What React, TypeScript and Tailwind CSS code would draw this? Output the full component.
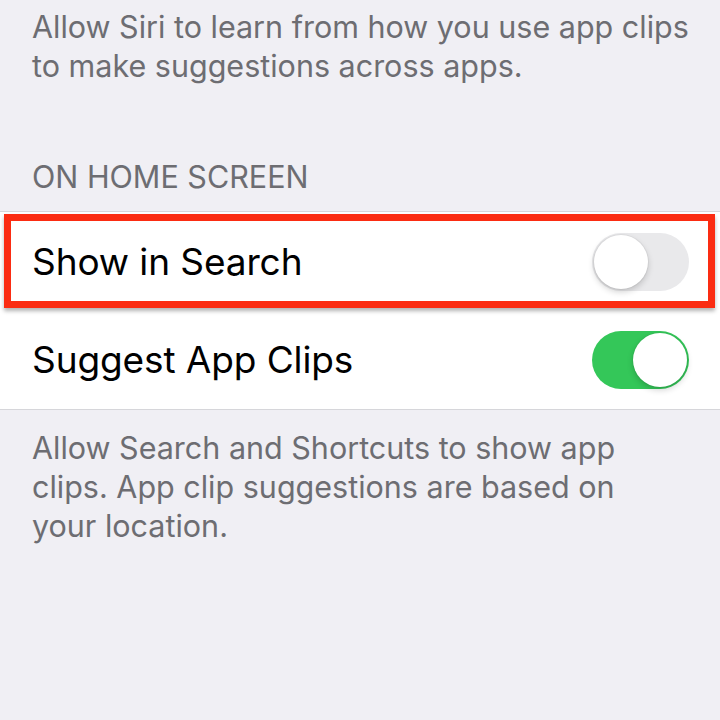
import React from "react";

function Toggle({ on }: { on: boolean }) {
  return (
    <div
      className={
        "relative w-[97px] h-[58px] rounded-full shrink-0 " +
        (on ? "bg-[#34c759]" : "bg-[#e9e9eb]")
      }
    >
      <div
        className={
          "absolute top-[2px] w-[54px] h-[54px] rounded-full bg-white shadow-[0_3px_6px_rgba(0,0,0,0.18),0_0_0_1px_rgba(0,0,0,0.04)] " +
          (on ? "right-[2px]" : "left-[2px]")
        }
      />
    </div>
  );
}

export default function App() {
  return (
    <div
      className="w-[720px] h-[720px] bg-[#f0eff4] overflow-hidden"
      style={{ fontFamily: "Inter, 'Noto Sans', sans-serif" }}
    >
      <p className="pt-[7px] pl-[32px] pr-[10px] text-[30.5px] leading-[39px] text-[#6d6d72] whitespace-nowrap">
        Allow Siri to learn from how you use app clips
        <br />
        to make suggestions across apps.
      </p>
      <div className="mt-[72px] pl-[32px] text-[30.5px] leading-[39px] text-[#6d6d72]">
        ON HOME SCREEN
      </div>
      <div className="mt-[15px] bg-white border-t border-b border-[#d6d6da]">
        <div className="relative h-[99px] flex items-center justify-between pl-[32px] pr-[31px]">
          <span className="text-[37px] leading-[99px] text-black tracking-[-0.1px]">
            Show in Search
          </span>
          <Toggle on={false} />
          <div className="absolute left-[4px] right-[5px] top-[2px] bottom-[3px] border-[7px] border-[#fb2c12] shadow-[0_3px_4px_rgba(0,0,0,0.3)]" />
        </div>
        <div className="h-[98px] flex items-center justify-between pl-[32px] pr-[31px]">
          <span className="text-[37px] leading-[98px] text-black tracking-[-0.1px]">
            Suggest App Clips
          </span>
          <Toggle on={true} />
        </div>
      </div>
      <p className="pt-[18px] pl-[32px] pr-[10px] text-[30.5px] leading-[39px] text-[#6d6d72] whitespace-nowrap">
        Allow Search and Shortcuts to show app
        <br />
        clips. App clip suggestions are based on
        <br />
        your location.
      </p>
    </div>
  );
}
